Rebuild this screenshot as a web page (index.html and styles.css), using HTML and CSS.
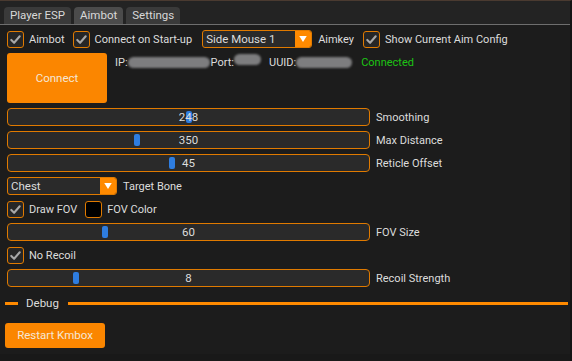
FILE: index.html
```html
<!DOCTYPE html>
<html>
<head>
<meta charset="utf-8">
<link rel="stylesheet" href="styles.css">
</head>
<body>
<div class="window">
  <div class="tabbar">
    <div class="tab">Player ESP</div>
    <div class="tab active">Aimbot</div>
    <div class="tab">Settings</div>
  </div>
  <div class="content">
    <div class="row">
      <label class="check"><span class="box checked"><svg viewBox="0 0 16 16"><polyline points="3.5,8.5 6.5,11.5 12.5,4.5"/></svg></span>Aimbot</label>
      <label class="check"><span class="box checked"><svg viewBox="0 0 16 16"><polyline points="3.5,8.5 6.5,11.5 12.5,4.5"/></svg></span>Connect on Start-up</label>
      <div class="combo combo-key"><span class="combo-text">Side Mouse 1</span><span class="arrow"><svg viewBox="0 0 16 16"><polygon points="3,4 13,4 8,12"/></svg></span></div>
      <span class="label">Aimkey</span>
      <label class="check"><span class="box checked"><svg viewBox="0 0 16 16"><polyline points="3.5,8.5 6.5,11.5 12.5,4.5"/></svg></span>Show Current Aim Config</label>
    </div>
    <div class="row conn-row">
      <button class="btn btn-connect">Connect</button>
      <div class="info">
        <span>IP:</span><span class="blur blur-ip"></span>
        <span>Port:</span><span class="blur blur-port"></span>
        <span class="uuid">UUID:</span><span class="blur blur-uuid"></span>
        <span class="status">Connected</span>
      </div>
    </div>
    <div class="row">
      <div class="slider"><span class="grab" style="left:178px"></span><span class="val">248</span></div>
      <span class="label">Smoothing</span>
    </div>
    <div class="row">
      <div class="slider"><span class="grab" style="left:126px"></span><span class="val">350</span></div>
      <span class="label">Max Distance</span>
    </div>
    <div class="row">
      <div class="slider"><span class="grab" style="left:161px"></span><span class="val">45</span></div>
      <span class="label">Reticle Offset</span>
    </div>
    <div class="row">
      <div class="combo"><span class="combo-text">Chest</span><span class="arrow"><svg viewBox="0 0 16 16"><polygon points="3,4 13,4 8,12"/></svg></span></div>
      <span class="label">Target Bone</span>
    </div>
    <div class="row">
      <label class="check"><span class="box checked"><svg viewBox="0 0 16 16"><polyline points="3.5,8.5 6.5,11.5 12.5,4.5"/></svg></span>Draw FOV</label>
      <label class="check"><span class="box color"></span>FOV Color</label>
    </div>
    <div class="row">
      <div class="slider"><span class="grab" style="left:94px"></span><span class="val">60</span></div>
      <span class="label">FOV Size</span>
    </div>
    <div class="row">
      <label class="check"><span class="box checked"><svg viewBox="0 0 16 16"><polyline points="3.5,8.5 6.5,11.5 12.5,4.5"/></svg></span>No Recoil</label>
    </div>
    <div class="row">
      <div class="slider"><span class="grab" style="left:65px"></span><span class="val">8</span></div>
      <span class="label">Recoil Strength</span>
    </div>
    <div class="sep"><span class="sep-line short"></span><span class="sep-text">Debug</span><span class="sep-line long"></span></div>
    <div class="row">
      <button class="btn btn-restart">Restart Kmbox</button>
    </div>
  </div>
  <div class="footer"></div>
</div>
</body>
</html>
```

FILE: styles.css
```css
* { box-sizing: border-box; }
html, body { margin: 0; padding: 0; }
body {
  background: #1c1c1c;
  font-family: Roboto, "Liberation Sans", sans-serif;
  font-size: 11px;
  color: #dcdcdc;
}
.window {
  width: 572px;
  height: 361px;
  display: flex;
  flex-direction: column;
  background: #1c1c1c;
  border-top: 1px solid #4a3a30;
  border-right: 2px solid #141414;
}
.tabbar {
  height: 24px;
  flex: none;
  display: flex;
  align-items: flex-end;
  gap: 3px;
  padding: 0 4px;
  background: #232323;
  border-bottom: 1px solid #6e6e6e;
}
.tab {
  height: 17px;
  line-height: 17px;
  padding: 0 6px;
  background: #3a3a3a;
  border-radius: 4px 4px 0 0;
  color: #d8d8d8;
  font-size: 11.5px;
}
.tab.active { background: #4b4b4b; }
.content {
  flex: 1;
  display: flex;
  flex-direction: column;
  gap: 5px;
  padding: 5px 7px 0 7px;
}
.row {
  display: flex;
  align-items: center;
  height: 18px;
}
.check {
  display: flex;
  align-items: center;
  gap: 5px;
  margin-right: 8px;
  white-space: nowrap;
}
.box {
  width: 17px;
  height: 17px;
  border: 1px solid #e07a00;
  border-radius: 3px;
  background: #262626;
  display: flex;
  align-items: center;
  justify-content: center;
}
.box svg { width: 15px; height: 15px; }
.box polyline {
  fill: none;
  stroke: #a8a8a8;
  stroke-width: 2.2;
  stroke-linecap: round;
  stroke-linejoin: round;
}
.box.color { background: #000; }
.combo {
  width: 110px;
  height: 18px;
  display: flex;
  border: 1px solid #e07a00;
  border-radius: 3px;
  background: #2a2a2a;
  overflow: hidden;
}
.combo-key { margin-left: 2px; }
.combo-text {
  flex: 1;
  padding-left: 3px;
  line-height: 16px;
  font-size: 11.5px;
}
.arrow {
  width: 16px;
  background: #ff8a00;
  display: flex;
  align-items: center;
  justify-content: center;
}
.arrow svg { width: 12px; height: 12px; }
.arrow polygon { fill: #ffffff; }
.label { margin-left: 6px; margin-right: 9px; white-space: nowrap; }
.conn-row { height: 50px; align-items: flex-start; }
.btn {
  border: none;
  background: #fb8600;
  color: #f6e6d6;
  font-family: inherit;
  font-size: 11.5px;
  border-radius: 3px;
  padding: 0;
}
.btn-connect { width: 100px; height: 50px; }
.info {
  display: flex;
  align-items: center;
  height: 18px;
  margin-left: 8px;
}
.blur {
  display: inline-block;
  height: 11px;
  background: #7d7d7f;
  border-radius: 6px;
  filter: blur(0.8px);
}
.blur-ip { width: 82px; margin-right: 1px; }
.blur-port { width: 27px; position: relative; top: -3px; }
.uuid { margin-left: 8px; }
.blur-uuid { width: 56px; }
.status { color: #1cc414; margin-left: 9px; }
.slider {
  position: relative;
  width: 363px;
  height: 18px;
  border: 1px solid #e07a00;
  border-radius: 4px;
  background: #2a2a2a;
  text-align: center;
  line-height: 16px;
  font-size: 11.5px;
}
.grab {
  position: absolute;
  top: 2px;
  width: 6px;
  height: 12px;
  background: #2e7de0;
  border-radius: 2px;
}
.val { position: relative; }
.slider + .label { margin-left: 6px; }
.sep {
  display: flex;
  align-items: center;
  height: 18px;
  margin-top: 2px;
  margin-left: -2px;
  margin-right: -5px;
}
.sep-line { height: 3px; background: #ff8a00; }
.sep-line.short { width: 13px; }
.sep-line.long { flex: 1; }
.sep-text { padding: 0 9px 0 8px; font-size: 11.5px; }
.btn-restart { width: 100px; height: 25px; margin-left: -2px; margin-top: 18px; }
.footer {
  height: 7px;
  flex: none;
  background: #191919;
}
```
